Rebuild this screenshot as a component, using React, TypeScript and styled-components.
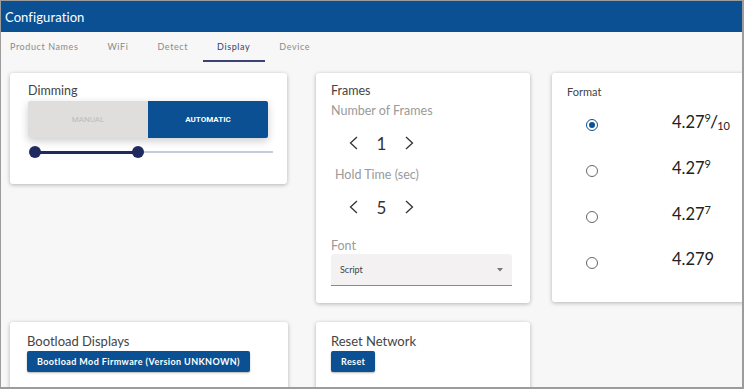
import { createGlobalStyle } from "styled-components";
import styled from "styled-components";

const GlobalStyle = createGlobalStyle`
  html, body {
    margin: 0;
    padding: 0;
    background: #f7f7f7;
    font-family: "Lato", "Open Sans", sans-serif;
  }
`;

const Frame = styled.div`
  width: 744px;
  height: 389px;
  box-sizing: border-box;
  border: 1px solid #9c9c9c;
  border-right-width: 2px;
  border-bottom-width: 2px;
  background: #f7f7f7;
  overflow: hidden;
  display: flex;
  flex-direction: column;
`;

const Header = styled.div`
  height: 31px;
  flex: none;
  background: #0a5092;
  color: #fff;
  display: flex;
  align-items: center;
  padding-left: 4px;
  font-size: 13px;
  letter-spacing: 0.1px;
`;

const TabBar = styled.div`
  height: 30px;
  flex: none;
  display: flex;
  align-items: stretch;
`;

const Tab = styled.div<{ $active?: boolean }>`
  display: flex;
  align-items: center;
  padding: 1px 14.5px 0;
  font-size: 9px;
  letter-spacing: 0.6px;
  color: ${(p) => (p.$active ? "#3a3f63" : "#8a8a8a")};
  border-bottom: 2px solid ${(p) => (p.$active ? "#3d4275" : "transparent")};
  &:first-child {
    padding-left: 9px;
  }
`;

const Content = styled.div`
  display: grid;
  grid-template-columns: 306px 236px 1fr;
  row-gap: 19px;
  align-items: start;
  padding: 11px 0 0 9px;
`;

const Card = styled.div<{ $w: number; $pad: string }>`
  width: ${(p) => p.$w}px;
  box-sizing: border-box;
  padding: ${(p) => p.$pad};
  background: #fff;
  border-radius: 3px;
  box-shadow: 0 1px 4px rgba(0, 0, 0, 0.28);
  display: flex;
  flex-direction: column;
  align-items: flex-start;
`;

const Title = styled.div<{ $size?: number }>`
  font-size: ${(p) => p.$size ?? 12.5}px;
  line-height: 14px;
  color: #444;
`;

const Label = styled.div<{ $indent?: number; $top?: number }>`
  font-size: 12.5px;
  line-height: 16px;
  color: #9a9a9a;
  margin-top: ${(p) => p.$top ?? 0}px;
  padding-left: ${(p) => p.$indent ?? 0}px;
`;

const Toggle = styled.div`
  margin-top: 3px;
  width: 240px;
  height: 37px;
  display: flex;
  border-radius: 2px;
  box-shadow: 0 3px 8px rgba(0, 0, 0, 0.2);
  overflow: hidden;
`;

const ToggleOption = styled.div<{ $on?: boolean }>`
  flex: 1;
  display: flex;
  align-items: center;
  justify-content: center;
  font-family: "Roboto", sans-serif;
  font-size: 8px;
  font-weight: ${(p) => (p.$on ? 700 : 400)};
  color: ${(p) => (p.$on ? "#fff" : "#bbb")};
  background: ${(p) => (p.$on ? "#0a5092" : "#dfdedd")};
`;

const Slider = styled.div`
  position: relative;
  margin: 8px 0 0 6px;
  width: 239px;
  height: 12px;
`;

const Rail = styled.div`
  position: absolute;
  left: 0;
  right: 0;
  top: 5px;
  height: 2px;
  background: #c3cbdd;
`;

const Fill = styled.div`
  position: absolute;
  top: 4.5px;
  height: 3px;
  background: #1f2a5e;
`;

const Thumb = styled.div`
  position: absolute;
  top: 0;
  width: 12px;
  height: 12px;
  margin-left: -5px;
  border-radius: 50%;
  background: #1f2a5e;
`;

const Stepper = styled.div<{ $top: number }>`
  display: flex;
  align-items: center;
  height: 24px;
  margin-top: ${(p) => p.$top}px;
  padding-left: 18px;
  color: #333;
`;

const StepValue = styled.div`
  width: 31px;
  margin: 0 8px;
  text-align: center;
  font-size: 17px;
`;

const Select = styled.div`
  margin-top: 0;
  width: 181px;
  height: 32px;
  box-sizing: border-box;
  background: #f3f1f2;
  border-bottom: 1px solid #8a8a8a;
  border-radius: 3px 3px 0 0;
  display: flex;
  align-items: center;
  justify-content: space-between;
  padding: 0 9px 0 9px;
  font-size: 9px;
  color: #444;
`;

const FormatRow = styled.div`
  display: flex;
  align-items: center;
  height: 46px;
`;

const Radio = styled.div<{ $checked?: boolean }>`
  width: 10px;
  height: 10px;
  margin-left: 19px;
  border-radius: 50%;
  border: 1.3px solid ${(p) => (p.$checked ? "#0a5092" : "#666")};
  display: flex;
  align-items: center;
  justify-content: center;
  &::after {
    content: "";
    width: 6px;
    height: 6px;
    border-radius: 50%;
    background: ${(p) => (p.$checked ? "#0a5092" : "transparent")};
  }
`;

const Value = styled.div`
  margin: 0 0 8px 74px;
  font-size: 16.5px;
  color: #222;
  white-space: nowrap;
  sup {
    font-size: 11px;
    vertical-align: 6px;
  }
  sub {
    font-size: 11px;
    vertical-align: -2px;
  }
`;

const Slash = styled.span`
  font-size: 18px;
  margin: 0 -1px;
`;

const Button = styled.button`
  margin-top: 3px;
  height: 21px;
  padding: 0 10px;
  border: none;
  border-radius: 2px;
  background: #0a5092;
  color: #fff;
  font-family: "Lato", sans-serif;
  font-size: 9px;
  font-weight: 700;
  letter-spacing: 0.4px;
  box-shadow: 0 1px 2px rgba(0, 0, 0, 0.3);
`;

const Chevron = ({ dir }: { dir: "left" | "right" }) => (
  <svg width="9" height="14" viewBox="0 0 9 14">
    <polyline
      points={dir === "left" ? "8,1 1.5,7 8,13" : "1,1 7.5,7 1,13"}
      fill="none"
      stroke="#333"
      strokeWidth="1.3"
    />
  </svg>
);

const Caret = () => (
  <svg width="6" height="4" viewBox="0 0 6 4">
    <polygon points="0,0 6,0 3,3.5" fill="#777" />
  </svg>
);

const tabs = ["Product Names", "WiFi", "Detect", "Display", "Device"];

const slider = { min: 0, max: 100, low: 0, high: 43 };

const formats = [
  { checked: true, body: <>4.27<sup>9</sup><Slash>/</Slash><sub>10</sub></> },
  { checked: false, body: <>4.27<sup>9</sup></> },
  { checked: false, body: <>4.27<sup>7</sup></> },
  { checked: false, body: <>4.279</> },
];

const pct = (v: number) => ((v - slider.min) / (slider.max - slider.min)) * 100;

export default function App() {
  return (
    <>
      <GlobalStyle />
      <Frame>
        <Header>Configuration</Header>
        <TabBar>
          {tabs.map((t) => (
            <Tab key={t} $active={t === "Display"}>
              {t}
            </Tab>
          ))}
        </TabBar>
        <Content>
          <Card $w={277} $pad="11px 18px 26px 18px">
            <Title>Dimming</Title>
            <Toggle>
              <ToggleOption>MANUAL</ToggleOption>
              <ToggleOption $on>AUTOMATIC</ToggleOption>
            </Toggle>
            <Slider>
              <Rail />
              <Fill
                style={{
                  left: `${pct(slider.low)}%`,
                  width: `${pct(slider.high) - pct(slider.low)}%`,
                }}
              />
              <Thumb style={{ left: `${pct(slider.low)}%` }} />
              <Thumb style={{ left: `${pct(slider.high)}%` }} />
            </Slider>
          </Card>

          <Card $w={214} $pad="11px 17px 17px 15px">
            <Title>Frames</Title>
            <Label $top={5}>Number of Frames</Label>
            <Stepper $top={12}>
              <Chevron dir="left" />
              <StepValue>1</StepValue>
              <Chevron dir="right" />
            </Stepper>
            <Label $indent={4} $top={12}>
              Hold Time (sec)
            </Label>
            <Stepper $top={12}>
              <Chevron dir="left" />
              <StepValue>5</StepValue>
              <Chevron dir="right" />
            </Stepper>
            <Label $top={19}>Font</Label>
            <Select>
              <span>Script</span>
              <Caret />
            </Select>
          </Card>

          <Card $w={200} $pad="12px 0 16px 15px">
            <Title $size={11}>Format</Title>
            <div style={{ marginTop: 3 }}>
              {formats.map((f, i) => (
                <FormatRow key={i}>
                  <Radio $checked={f.checked} />
                  <Value>{f.body}</Value>
                </FormatRow>
              ))}
            </div>
          </Card>

          <Card $w={278} $pad="12px 17px 20px 17px">
            <Title $size={13}>Bootload Displays</Title>
            <Button>Bootload Mod Firmware (Version UNKNOWN)</Button>
          </Card>

          <Card $w={214} $pad="12px 15px 20px 15px">
            <Title $size={13}>Reset Network</Title>
            <Button>Reset</Button>
          </Card>
        </Content>
      </Frame>
    </>
  );
}
